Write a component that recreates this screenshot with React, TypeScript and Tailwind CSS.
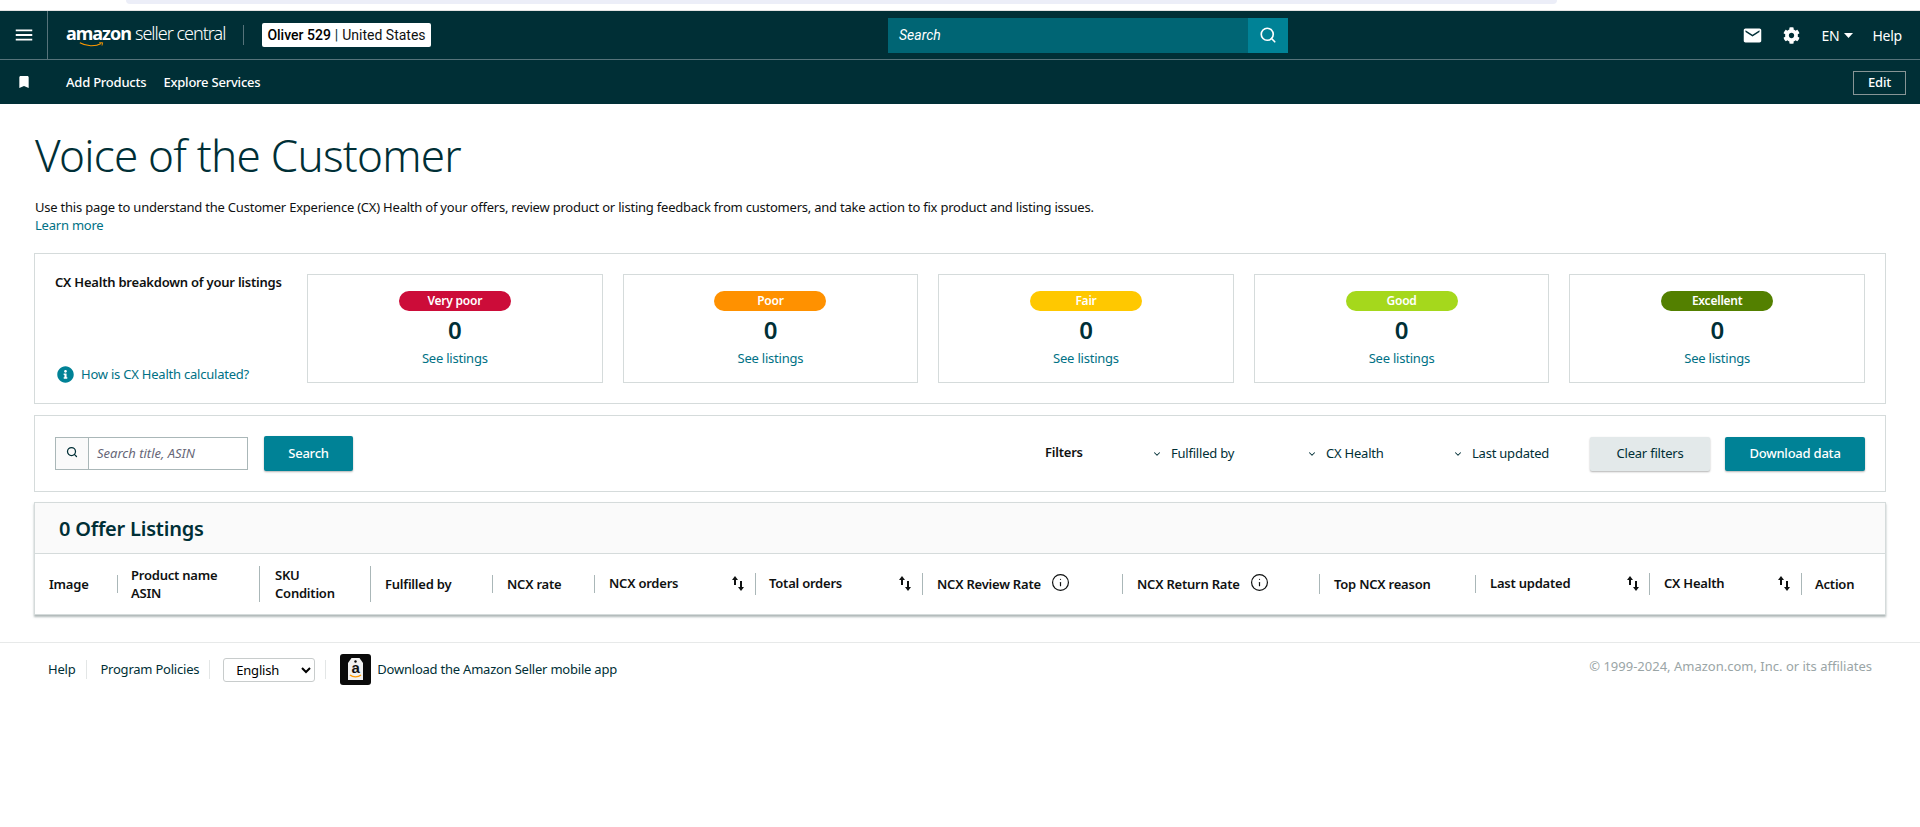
import { ChevronDown, Info, Search } from 'lucide-react';
import { FaCog, FaInfoCircle } from 'react-icons/fa';
import { MdBookmark, MdEmail, MdMenu } from 'react-icons/md';

const ember = { fontFamily: '"Noto Sans", sans-serif' };

const healthCards = [
  { label: 'Very poor', pill: 'bg-[#cc0c39] text-white' },
  { label: 'Poor', pill: 'bg-[#ff9100] text-white' },
  { label: 'Fair', pill: 'bg-[#ffc800] text-white' },
  { label: 'Good', pill: 'bg-[#a5d81c] text-white' },
  { label: 'Excellent', pill: 'bg-[#538000] text-white' },
];

function SortArrows() {
  return (
    <svg width="12" height="15" viewBox="0 0 12 15" className="-mt-[1px] shrink-0 text-[#0f1111]">
      <path d="M3 0 L6 4 H4 V9 H2 V4 H0 Z" fill="currentColor" />
      <path d="M9 15 L12 11 H10 V5 H8 V11 H6 Z" fill="currentColor" />
    </svg>
  );
}

function Sep({ h = 'h-[18px]' }: { h?: string }) {
  return <div className={`w-px shrink-0 bg-[#aab7b8] ${h}`} />;
}

function FilterSelect({ label, className }: { label: string; className: string }) {
  return (
    <div className={`flex items-center gap-[9px] text-[13px] text-[#002f36] ${className}`}>
      <ChevronDown size={10} strokeWidth={2.5} />
      <span>{label}</span>
    </div>
  );
}

function Header() {
  return (
    <div className="bg-[#002f36] text-white">
      <div className="relative flex h-[49px] items-center border-b border-[#56737a]">
        <div className="flex h-full w-[48px] shrink-0 items-center justify-center border-r border-[#56737a]">
          <MdMenu size={22} />
        </div>
        <div className="ml-[18px] flex h-[24px] w-[160px] shrink-0 flex-col">
          <div className="flex items-baseline whitespace-nowrap text-[18px] leading-[20px] tracking-[-1px]">
            <span className="font-bold">amazon</span>
            <span className="ml-[4px] font-light">seller central</span>
          </div>
          <svg width="36" height="7" viewBox="0 0 36 7" className="-mt-[1px] ml-[8px]">
            <path d="M1 1 C10 6 22 7 31 2" stroke="#ff9900" strokeWidth="1.6" fill="none" />
            <path d="M28 1 L33 1 L32 5" stroke="#ff9900" strokeWidth="1.2" fill="none" />
          </svg>
        </div>
        <div className="ml-[17px] h-[20px] w-px bg-[#56737a]" />
        <div
          className="ml-[18px] flex h-[24px] w-[169px] items-center justify-center rounded-[2px] bg-white text-[14px] tracking-normal text-black"
          style={{ fontFamily: 'Roboto, sans-serif' }}
        >
          <span className="font-medium">Oliver 529</span>
          <span className="mx-[4px] text-[#002f36]">|</span>
          <span className="text-[#0f1111]">United States</span>
        </div>
        <div className="ml-[457px] flex h-[35px] w-[400px] shrink-0">
          <div
            className="flex flex-1 items-center bg-[#006574] pl-[11px] text-[14px] italic tracking-normal"
            style={{ fontFamily: 'Roboto, sans-serif' }}
          >
            Search
          </div>
          <div className="flex w-[40px] items-center justify-center bg-[#008296]">
            <Search size={18} strokeWidth={2.2} />
          </div>
        </div>
        <div className="ml-auto flex items-center pr-[18px] text-[14px]">
          <MdEmail size={21} />
          <FaCog size={17} className="ml-[20px]" />
          <span className="ml-[21px]">EN</span>
          <svg width="9" height="5" viewBox="0 0 9 5" className="ml-[5px]">
            <path d="M0 0 H9 L4.5 5 Z" fill="#fff" />
          </svg>
          <span className="ml-[19px]">Help</span>
        </div>
      </div>
      <div className="flex h-[44px] items-center text-[13px] font-medium">
        <MdBookmark size={16} className="ml-[16px]" />
        <span className="ml-[34px] mt-[2px]">Add Products</span>
        <span className="ml-[17px] mt-[2px]">Explore Services</span>
        <div className="ml-auto mr-[14px] mt-[2px] flex h-[24px] w-[53px] items-center justify-center border border-[#879596] text-[13px]">
          Edit
        </div>
      </div>
    </div>
  );
}

function HealthPanel() {
  return (
    <div className="mt-[19px] flex h-[151px] border border-[#d5dbdb] pb-[20px] pl-[20px] pr-[20px] pt-[20px]">
      <div className="flex w-[252px] shrink-0 flex-col justify-between">
        <div className="mt-[-1px] text-[13px] font-semibold leading-[18px] text-[#0f1111]">CX Health breakdown of your listings</div>
        <div className="flex items-center gap-[7px] pl-[2px] text-[13px] leading-[18px] text-[#007185]">
          <FaInfoCircle size={17} className="text-[#008296]" />
          <span>How is CX Health calculated?</span>
        </div>
      </div>
      <div className="flex flex-1 gap-[20px]">
        {healthCards.map((card) => (
          <div key={card.label} className="flex flex-1 flex-col items-center border border-[#d5dbdb] pt-[16px]">
            <div className={`flex h-[20px] w-[112px] items-center justify-center rounded-full text-[12px] font-semibold ${card.pill}`}>
              {card.label}
            </div>
            <div className="mt-[2px] text-[24px] font-semibold leading-[34px] text-[#002f36]">0</div>
            <div className="mt-[2px] text-[13px] leading-[18px] text-[#007185]">See listings</div>
          </div>
        ))}
      </div>
    </div>
  );
}

function FilterPanel() {
  return (
    <div className="mt-[11px] flex h-[77px] items-center border border-[#d5dbdb] pl-[20px] pr-[20px]">
      <div className="flex h-[33px] w-[193px] border border-[#aab7b8]">
        <div className="flex w-[33px] items-center justify-center border-r border-[#aab7b8] bg-[#fafafa] pb-[3px]">
          <Search size={12} strokeWidth={2.5} className="text-[#002f36]" />
        </div>
        <div className="flex flex-1 items-center pl-[8px] pt-[1px] text-[13px] italic tracking-normal text-[#667]">Search title, ASIN</div>
      </div>
      <div className="ml-[16px] flex h-[35px] w-[89px] items-center justify-center rounded-[2px] bg-[#008296] text-[13px] font-medium text-white shadow-[0_1px_2px_rgba(0,0,0,0.3)]">
        Search
      </div>
      <div className="ml-auto flex items-center">
        <div className="mt-[-2px] w-[107px] text-[13px] font-semibold text-[#0f1111]">Filters</div>
        <FilterSelect label="Fulfilled by" className="mt-[1px] w-[155px]" />
        <FilterSelect label="CX Health" className="mt-[1px] w-[146px]" />
        <FilterSelect label="Last updated" className="mt-[1px] w-[137px]" />
        <div className="flex h-[34px] w-[120px] items-center justify-center rounded-[2px] bg-[#e3e9ea] pt-[1px] text-[13px] text-[#002f36] shadow-[0_1px_2px_rgba(0,0,0,0.3)]">
          Clear filters
        </div>
        <div className="ml-[15px] flex h-[34px] w-[140px] items-center justify-center rounded-[2px] bg-[#008296] pt-[1px] text-[13px] font-medium text-white shadow-[0_1px_2px_rgba(0,0,0,0.3)]">
          Download data
        </div>
      </div>
    </div>
  );
}

function ListingsTable() {
  return (
    <div className="mt-[10px] border border-[#d5dbdb] shadow-[0_2px_2px_rgba(120,135,135,0.6)]">
      <div className="flex h-[51px] items-center border-b border-[#d5dbdb] bg-[#fafafa] pl-[24px] pt-[1px] text-[20px] font-semibold text-[#002f36]">
        0 Offer Listings
      </div>
      <div className="flex h-[60px] items-center text-[13px] font-semibold leading-[18px] text-[#0f1111]">
        <div className="w-[82px] shrink-0 pl-[14px]">Image</div>
        <Sep />
        <div className="w-[141px] shrink-0 pl-[13px]">
          <div>Product name</div>
          <div>ASIN</div>
        </div>
        <Sep h="h-[36px]" />
        <div className="w-[110px] shrink-0 pl-[15px]">
          <div>SKU</div>
          <div>Condition</div>
        </div>
        <Sep h="h-[36px]" />
        <div className="w-[121px] shrink-0 pl-[14px]">Fulfilled by</div>
        <Sep />
        <div className="w-[101px] shrink-0 pl-[14px]">NCX rate</div>
        <Sep />
        <div className="flex w-[160px] shrink-0 items-center justify-between pl-[14px] pr-[11px]">
          <span className="-mt-[3px]">NCX orders</span>
          <SortArrows />
        </div>
        <Sep h="h-[22px]" />
        <div className="flex w-[166px] shrink-0 items-center justify-between pl-[13px] pr-[11px]">
          <span className="-mt-[3px]">Total orders</span>
          <SortArrows />
        </div>
        <Sep h="h-[22px]" />
        <div className="flex w-[199px] shrink-0 items-center gap-[10px] pl-[14px]">
          <span>NCX Review Rate</span>
          <Info size={19} strokeWidth={1.5} className="-mt-[3px]" />
        </div>
        <Sep h="h-[20px]" />
        <div className="flex w-[196px] shrink-0 items-center gap-[10px] pl-[14px]">
          <span>NCX Return Rate</span>
          <Info size={19} strokeWidth={1.5} className="-mt-[3px]" />
        </div>
        <Sep h="h-[20px]" />
        <div className="w-[155px] shrink-0 pl-[14px]">Top NCX reason</div>
        <Sep />
        <div className="flex w-[173px] shrink-0 items-center justify-between pl-[14px] pr-[10px]">
          <span className="-mt-[3px]">Last updated</span>
          <SortArrows />
        </div>
        <Sep h="h-[22px]" />
        <div className="flex w-[151px] shrink-0 items-center justify-between pl-[14px] pr-[11px]">
          <span className="-mt-[3px]">CX Health</span>
          <SortArrows />
        </div>
        <Sep h="h-[22px]" />
        <div className="pl-[13px]">Action</div>
      </div>
    </div>
  );
}

function AppIcon() {
  return (
    <svg width="31" height="31" viewBox="0 0 31 31" className="shrink-0">
      <rect width="31" height="31" rx="3" fill="#0a0a0a" />
      <path d="M11.5 4 H19.5 L23 9 V26 H8 V9 Z" fill="#f2f2f2" />
      <circle cx="15.5" cy="7.5" r="1.2" fill="#0a0a0a" />
      <text x="15.5" y="19" textAnchor="middle" fontSize="15" fontWeight="700" fill="#111" fontFamily="Liberation Sans, sans-serif">
        a
      </text>
      <path d="M10 21 C13 23.5 18 23.5 21 21" stroke="#ff9900" strokeWidth="1.4" fill="none" />
    </svg>
  );
}

function Footer() {
  return (
    <div className="mt-[27px] flex h-[54px] items-center border-t border-[#e7e9e9] pl-[48px] pr-[48px] text-[13px] text-[#002f36]">
      <span>Help</span>
      <div className="ml-[11px] h-[19px] w-px bg-[#e3e6e6]" />
      <span className="ml-[13px]">Program Policies</span>
      <div className="ml-[10px] h-[19px] w-px bg-[#e3e6e6]" />
      <select
        defaultValue="English"
        className="ml-[13px] h-[24px] w-[92px] rounded-[3px] border border-[#c8cccc] bg-white pl-[8px] text-[13px] text-black"
      >
        <option>English</option>
      </select>
      <div className="ml-[10px] h-[19px] w-px bg-[#e3e6e6]" />
      <div className="ml-[14px]">
        <AppIcon />
      </div>
      <span className="ml-[6px]">Download the Amazon Seller mobile app</span>
      <span className="-mt-[6px] ml-auto tracking-normal text-[#9aa5a6]">© 1999-2024, Amazon.com, Inc. or its affiliates</span>
    </div>
  );
}

export default function App() {
  return (
    <div className="min-h-[827px] bg-white tracking-[-0.22px]" style={ember}>
      <div className="h-[11px] border-b border-[#e3e3e3]">
        <div className="ml-[126px] h-[4px] w-[1431px] rounded-b-[6px] bg-[#eceef8]" />
      </div>
      <Header />
      <div className="px-[34px]">
        <h1 className="pl-[1px] pt-[24px] text-[44px] font-light leading-[54px] tracking-[-0.75px] text-[#002f36]">Voice of the Customer</h1>
        <p className="mt-[16px] pl-[1px] text-[13px] leading-[18px] text-[#0f1111]">
          Use this page to understand the Customer Experience (CX) Health of your offers, review product or listing feedback from customers, and take action to fix product and listing issues.
        </p>
        <p className="pl-[1px] text-[13px] leading-[18px] text-[#007185]">Learn more</p>
        <HealthPanel />
        <FilterPanel />
        <ListingsTable />
      </div>
      <Footer />
    </div>
  );
}
